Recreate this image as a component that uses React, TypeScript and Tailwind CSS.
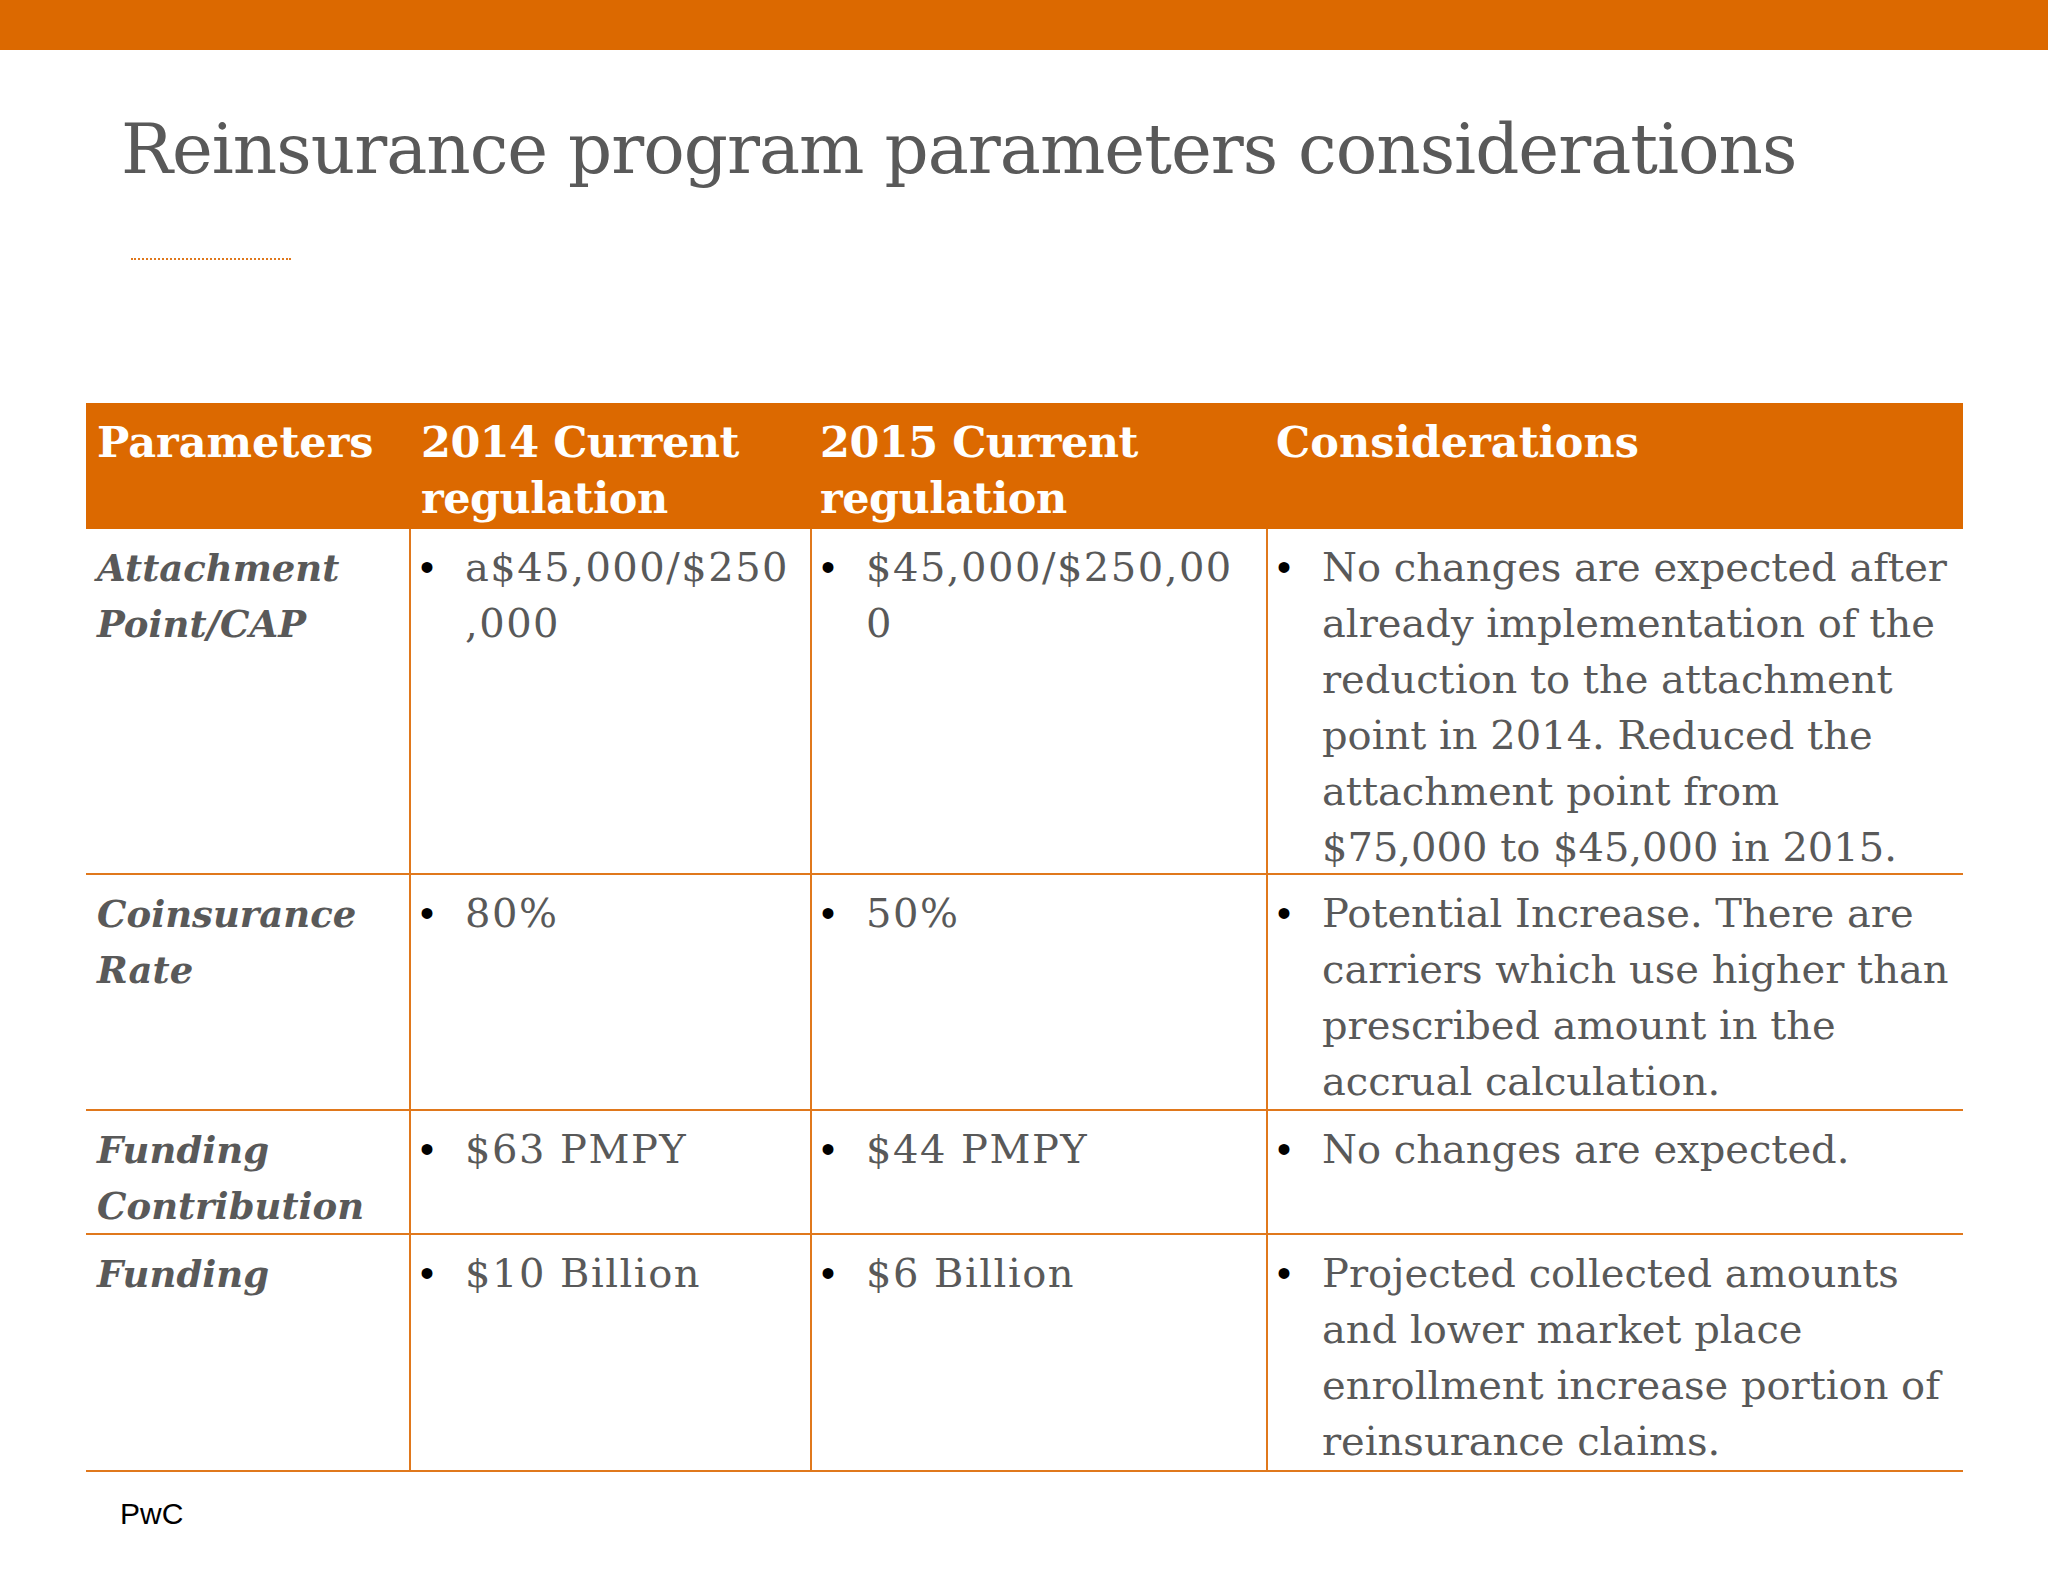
import React from "react";

const serif = { fontFamily: '"DejaVu Serif", "Liberation Serif", serif' };
const sans = { fontFamily: '"Liberation Sans", Arial, sans-serif' };

type Row = {
  label: string[];
  y2014: string[];
  y2015: string[];
  notes: string[];
  h: string;
};

const rows: Row[] = [
  {
    label: ["Attachment", "Point/CAP"],
    y2014: ["a$45,000/$250", ",000"],
    y2015: ["$45,000/$250,00", "0"],
    notes: [
      "No changes are expected after",
      "already implementation of the",
      "reduction to the attachment",
      "point in 2014. Reduced the",
      "attachment point from",
      "$75,000 to $45,000 in 2015.",
    ],
    h: "h-[346px]",
  },
  {
    label: ["Coinsurance", "Rate"],
    y2014: ["80%"],
    y2015: ["50%"],
    notes: [
      "Potential Increase. There are",
      "carriers which use higher than",
      "prescribed amount in the",
      "accrual calculation.",
    ],
    h: "h-[236px]",
  },
  {
    label: ["Funding", "Contribution"],
    y2014: ["$63 PMPY"],
    y2015: ["$44 PMPY"],
    notes: ["No changes are expected."],
    h: "h-[124px]",
  },
  {
    label: ["Funding"],
    y2014: ["$10 Billion"],
    y2015: ["$6 Billion"],
    notes: [
      "Projected collected amounts",
      "and lower market place",
      "enrollment increase portion of",
      "reinsurance claims.",
    ],
    h: "h-[237px]",
  },
];

function Bullet({ lines, wide }: { lines: string[]; wide?: boolean }) {
  return (
    <div className="flex pl-[9px] pt-[10px]">
      <span className="w-[45px] shrink-0 text-black" style={sans}>
        •
      </span>
      <div className={wide ? "tracking-[1.5px]" : ""}>
        {lines.map((l, i) => (
          <div key={i} className="whitespace-nowrap">
            {l}
          </div>
        ))}
      </div>
    </div>
  );
}

export default function App() {
  return (
    <div className="w-[2048px] h-[1582px] bg-white overflow-hidden" style={serif}>
      <div className="h-[50px] bg-[#dc6900]" />

      <h1 className="pl-[121px] pt-[51px] text-[69px] leading-[96px] tracking-[-1px] whitespace-nowrap font-normal text-[#595959]">
        Reinsurance program parameters considerations
      </h1>
      <div className="ml-[131px] mt-[61px] w-[160px] border-t-2 border-dotted border-[#e0781c]" />

      <div className="ml-[86px] mt-[143px] w-[1877px] text-[40px] leading-[56px] text-[#595959]">
        <div className="grid h-[126px] grid-cols-[323px_401px_456px_697px] bg-[#dc6900] text-[43px] font-bold text-white">
          <div className="pl-[11px] pt-[11px]">Parameters</div>
          <div className="pl-[12px] pt-[11px] tracking-[-0.5px]">
            <div>2014 Current</div>
            <div>regulation</div>
          </div>
          <div className="pl-[10px] pt-[11px] tracking-[-0.5px]">
            <div>2015 Current</div>
            <div>regulation</div>
          </div>
          <div className="pl-[10px] pt-[11px]">Considerations</div>
        </div>

        {rows.map((r, i) => (
          <div
            key={i}
            className={`grid grid-cols-[323px_401px_456px_697px] border-b-2 border-[#e0781c] ${r.h}`}
          >
            <div className="pl-[11px] pt-[11px] text-[37px] font-bold italic">
              {r.label.map((l, j) => (
                <div key={j}>{l}</div>
              ))}
            </div>
            <div className="border-l-2 border-[#e0781c]">
              <Bullet lines={r.y2014} wide />
            </div>
            <div className="border-l-2 border-[#e0781c]">
              <Bullet lines={r.y2015} wide />
            </div>
            <div className="border-l-2 border-[#e0781c]">
              <Bullet lines={r.notes} />
            </div>
          </div>
        ))}
      </div>

      <div className="ml-[120px] mt-[27px] text-[30px] leading-none text-black" style={sans}>
        PwC
      </div>
    </div>
  );
}
